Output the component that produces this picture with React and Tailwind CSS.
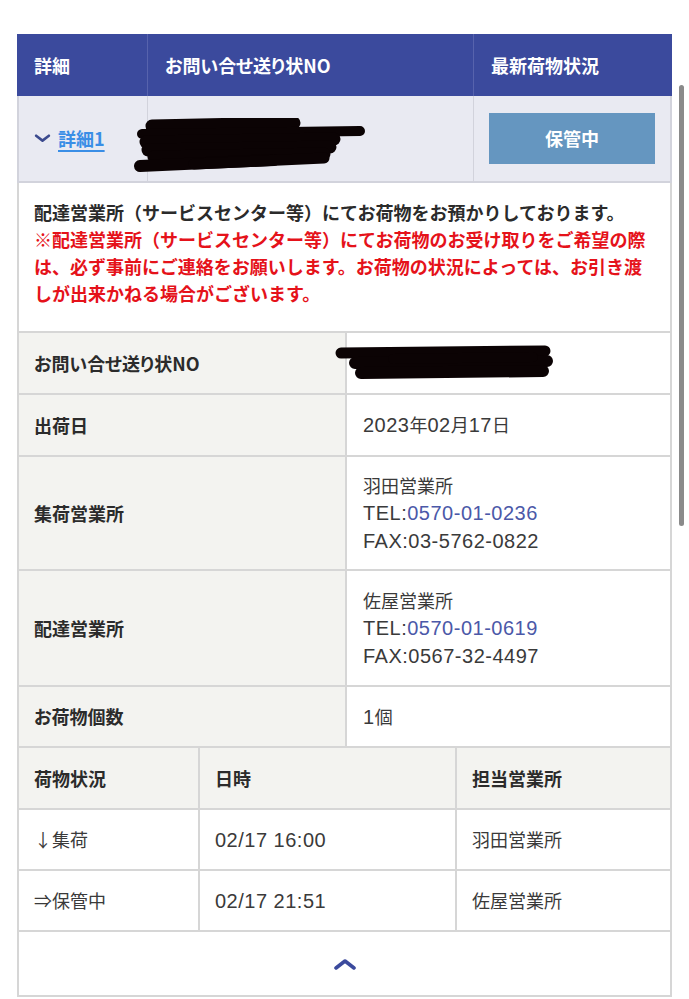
import React from 'react'

const jp = "font-['Noto_Sans_CJK_JP',sans-serif]"

// Latin runs (digits, TEL/FAX) are set a little larger, as in the original's font
function T({ children }) {
  const parts = String(children).split(/([\x20-\x7e]+)/).filter(Boolean)
  return parts.map((p, i) =>
    /^[\x20-\x7e]+$/.test(p) ? (
      <span key={i} className="font-['Liberation_Sans',sans-serif] text-[20px] tracking-[0.5px]">{p}</span>
    ) : (
      <span key={i}>{p}</span>
    )
  )
}

function Chevron({ up = false, className }) {
  return (
    <svg viewBox="0 0 24 12" className={className} fill="none">
      <path
        d={up ? 'M3 10 L12 3 L21 10' : 'M3 2 L12 9 L21 2'}
        stroke="currentColor"
        strokeWidth="3.6"
        strokeLinecap="round"
        strokeLinejoin="round"
      />
    </svg>
  )
}

// black marker scribble over the tracking number
function Scribble({ strokes, className }) {
  return (
    <svg className={className} viewBox="0 0 240 60" fill="none">
      {strokes.map((s, i) => (
        <path key={i} d={s.d} stroke="#0b0304" strokeWidth={s.w} strokeLinecap="round" />
      ))}
    </svg>
  )
}

const topScribble = [
  { d: 'M18 8 L160 5', w: 13 },
  { d: 'M8 16 L226 13', w: 10 },
  { d: 'M12 24 L200 21', w: 13 },
  { d: 'M14 32 L196 29', w: 13 },
  { d: 'M20 39 L190 36', w: 13 },
  { d: 'M6 48 L140 42', w: 12 },
  { d: 'M60 46 L190 40', w: 11 },
]

const noScribble = [
  { d: 'M8 8 L212 6', w: 11 },
  { d: 'M22 18 L214 16', w: 12 },
  { d: 'M60 14 L200 12', w: 10 },
  { d: 'M28 28 L210 26', w: 12 },
]

function DetailRow({ label, h, children }) {
  return (
    <div className={`flex border-x-2 border-b-2 border-[#d6d6d6] ${h}`}>
      <div className="w-[328px] shrink-0 bg-[#f3f3f0] border-r-2 border-[#d6d6d6] flex items-center pl-[15px] font-bold text-[18px] text-[#2b2b2b] [font-feature-settings:'palt']">
        {label}
      </div>
      <div className="flex-1 flex flex-col justify-center pl-[16px] text-[18px] leading-[27px] text-[#3a3a3a]">
        {children}
      </div>
    </div>
  )
}

function HistoryRow({ cells, head = false }) {
  const base = head ? "bg-[#f3f3f0] font-bold [font-feature-settings:'palt'] text-[#2b2b2b]" : 'bg-white text-[#3a3a3a]'
  const c = (v) => (head ? v : <T>{v}</T>)
  return (
    <div className={`flex border-x-2 border-b-2 border-[#d6d6d6] ${head ? 'h-[62px]' : 'h-[61px]'} text-[18px]`}>
      <div className={`w-[181px] shrink-0 border-r-2 border-[#d6d6d6] flex items-center pl-[15px] ${base}`}>{c(cells[0])}</div>
      <div className={`w-[257px] shrink-0 border-r-2 border-[#d6d6d6] flex items-center pl-[15px] ${base}`}>{c(cells[1])}</div>
      <div className={`flex-1 flex items-center pl-[15px] ${base}`}>{c(cells[2])}</div>
    </div>
  )
}

function Office({ name, tel, fax }) {
  return (
    <>
      <span>{name}</span>
      <span>
        <T>TEL:</T>
        <a href="#" className="text-[#4b58a8]"><T>{tel}</T></a>
      </span>
      <span><T>{'FAX:' + fax}</T></span>
    </>
  )
}

export default function App() {
  return (
    <div className={`relative min-h-[999px] bg-white ${jp}`}>
      <div className="pt-[34px] pl-[17px] w-[672px]">
        {/* header */}
        <div className="flex h-[62px] bg-[#3b4a9d] text-white font-bold text-[18px] [font-feature-settings:'palt']">
          <div className="w-[131px] shrink-0 border-r border-[#5763ad] flex items-center pl-[17px]">詳細</div>
          <div className="w-[326px] shrink-0 border-r border-[#5763ad] flex items-center pl-[17px]">お問い合せ送り状NO</div>
          <div className="flex-1 flex items-center pl-[17px]">最新荷物状況</div>
        </div>

        {/* summary row */}
        <div className="flex h-[87px] bg-[#e9eaf2] border-x-2 border-b-2 border-[#d2d3dc]">
          <div className="w-[129px] shrink-0 border-r border-[#d2d3dc] flex items-center pl-[15px] gap-[7px]">
            <Chevron className="w-[17px] h-[9px] text-[#3b4a8e]" />
            <a href="#" className="text-[#3a8ee6] font-bold text-[18px] underline underline-offset-[4px] decoration-[1.5px]">詳細1</a>
          </div>
          <div className="relative w-[326px] shrink-0 border-r border-[#d2d3dc]">
            <Scribble strokes={topScribble} className="absolute left-[-14px] top-[22px] w-[240px] h-[60px]" />
          </div>
          <div className="flex-1 flex items-center px-[15px]">
            <div className="w-full h-[51px] bg-[#6596c0] text-white font-bold text-[18px] flex items-center justify-center">保管中</div>
          </div>
        </div>

        {/* notice */}
        <div className="h-[150px] border-x-2 border-b-2 border-[#d6d6d6] pl-[15px] pt-[16px] text-[18px] leading-[27px] font-bold">
          <p className="text-[#2b2b2b]">配達営業所（サービスセンター等）にてお荷物をお預かりしております。</p>
          <p className="text-[#e5121a]">
            ※配達営業所（サービスセンター等）にてお荷物のお受け取りをご希望の際
            <br />
            は、必ず事前にご連絡をお願いします。お荷物の状況によっては、お引き渡
            <br />
            しが出来かねる場合がございます。
          </p>
        </div>

        {/* details */}
        <DetailRow label="お問い合せ送り状NO" h="h-[62px]">
          <div className="relative h-full">
            <Scribble strokes={noScribble} className="absolute left-[-30px] top-[12px] w-[240px] h-[60px]" />
          </div>
        </DetailRow>
        <DetailRow label="出荷日" h="h-[62px]"><span><T>2023年02月17日</T></span></DetailRow>
        <DetailRow label="集荷営業所" h="h-[114px]">
          <Office name="羽田営業所" tel="0570-01-0236" fax="03-5762-0822" />
        </DetailRow>
        <DetailRow label="配達営業所" h="h-[116px]">
          <Office name="佐屋営業所" tel="0570-01-0619" fax="0567-32-4497" />
        </DetailRow>
        <DetailRow label="お荷物個数" h="h-[61px]"><span><T>1個</T></span></DetailRow>

        {/* history */}
        <HistoryRow head cells={['荷物状況', '日時', '担当営業所']} />
        <HistoryRow cells={['↓集荷', '02/17 16:00', '羽田営業所']} />
        <HistoryRow cells={['⇒保管中', '02/17 21:51', '佐屋営業所']} />

        {/* close */}
        <div className="h-[65px] border-x-2 border-b-2 border-[#d6d6d6] flex items-center justify-center">
          <Chevron up className="w-[24px] h-[12px] text-[#3b4a9d]" />
        </div>
      </div>

      {/* overlay scrollbar */}
      <div className="absolute left-[679px] top-[85px] w-[5px] h-[441px] rounded-full bg-[#8a8a8a]" />
    </div>
  )
}
